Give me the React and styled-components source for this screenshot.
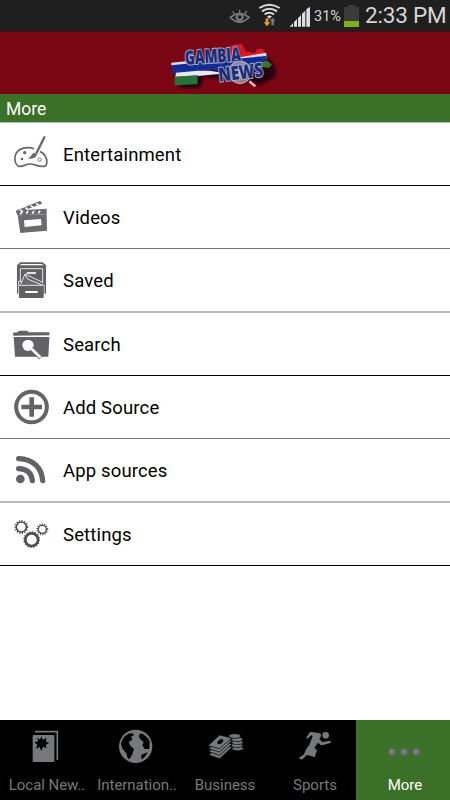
import React, { useState } from "react";

import styled, { createGlobalStyle } from "styled-components";

const GlobalStyle = createGlobalStyle`
  * {
    box-sizing: border-box;
  }
  body {
    margin: 0;
    background: #fff;
    font-family: Roboto, "Liberation Sans", sans-serif;
  }
`;

// the icons are drawn at three units to the pixel
function PaletteIcon() {
  return (
    <RowSvg viewBox="24 129 150 126" fill="none" stroke="#68686a">
      <path
        d="M102 176C84 169 55 173 47 193C42 207 45 222 54 228C66 234 76 221 91 222C105 223 115 231 133 229C143 227 142 208 136 199C133 193 127 187 120 185"
        strokeWidth="5"
      />
      <path d="M133 142L110 188" strokeWidth="7" strokeLinecap="round" />
      <path
        d="M103 188L111 193C109 203 99 209 82 205C94 202 93 192 103 188Z"
        fill="#68686a"
        stroke="none"
      />
      <circle cx="74" cy="188" r="5" fill="#68686a" stroke="none" />
      <circle cx="66" cy="207" r="4" fill="#68686a" stroke="none" />
      <circle cx="119" cy="209" r="5" strokeWidth="2.5" />
    </RowSvg>
  );
}

function ClapperIcon() {
  return (
    <RowSvg viewBox="24 18 150 126" fill="#6b6b6d">
      <path d="M48 62L119 33Q124 32 126 41L51 70Z" />
      <path d="M48 63L52 76L140 73V56L62 61Z" />
      <path
        d="M60 60l9 5M76 53l9 6M92 47l9 6M108 40l9 6M66 65l-5 8M84 63l-5 8M102 63l-5 8M120 62l-5 8"
        stroke="#fff"
        strokeWidth="5"
      />
      <path d="M53 76L140 73L141 122L61 129Z" />
      <path d="M72 91L123 87L125 106L74 111Z" fill="#fff" />
    </RowSvg>
  );
}

function CabinetIcon() {
  return (
    <RowSvg viewBox="24 207 150 126">
      <path d="M51 226L61 217H128L138 226V311H51Z" fill="#616163" />
      <path d="M58 226L64 222H125L131 226Z" fill="#fff" />
      <path
        d="M61 274V236H128V280M56 312V274H64M132 312V284"
        fill="none"
        stroke="#fff"
        strokeWidth="2.5"
      />
      <path d="M80 249H108" stroke="#fff" strokeWidth="5" />
      <path d="M62 283L75 252L83 267L127 285Z" fill="#6c6c6e" />
      <path
        d="M62 283L75 252L83 267L127 285M75 252L128 277"
        fill="none"
        stroke="#fff"
        strokeWidth="2.5"
      />
      <path d="M57 287H131V324H57Z" fill="#616163" />
      <path d="M57 286H131" stroke="#fff" strokeWidth="2.5" />
      <path d="M76 306H113" stroke="#fff" strokeWidth="6" />
    </RowSvg>
  );
}

function FolderSearchIcon() {
  return (
    <RowSvg viewBox="24 39 150 126">
      <path
        d="M40 77L39 68L53 67L57 62H82L86 67H148V76ZM41 81H148L145 140H45Z"
        fill="#626264"
      />
      <circle cx="84" cy="106" r="17" fill="#fff" />
      <path d="M94 116L122 143" stroke="#666" strokeWidth="13" />
      <path d="M92 114L121 142" stroke="#fff" strokeWidth="8" />
    </RowSvg>
  );
}

function AddIcon() {
  return (
    <RowSvg viewBox="24 228 150 126" fill="none" stroke="#646466">
      <circle cx="94.5" cy="291" r="46" strokeWidth="12" />
      <path d="M95 262V320M64 291H126" strokeWidth="14" />
    </RowSvg>
  );
}

function FeedIcon() {
  return (
    <RowSvg viewBox="24 27 150 126" fill="none" stroke="#626264">
      <circle cx="61" cy="117" r="13" fill="#626264" stroke="none" />
      <path
        d="M56 86C81 87 95 100 97 122M56 56C99 57 125 83 128 122"
        strokeWidth="16"
        strokeLinecap="round"
      />
    </RowSvg>
  );
}

function Gear({ cx, cy, r, width, teeth }) {
  const step = (2 * Math.PI * (r + 3)) / teeth;
  return (
    <g fill="none" stroke="#505052">
      <circle cx={cx} cy={cy} r={r} strokeWidth={width} />
      <circle
        cx={cx}
        cy={cy}
        r={r + 3}
        strokeWidth="6"
        strokeDasharray={`${step * 0.45} ${step * 0.55}`}
      />
    </g>
  );
}

function GearsIcon() {
  return (
    <RowSvg viewBox="24 217 150 126">
      <Gear cx={64} cy={259} r={15} width={5} teeth={15} />
      <Gear cx={127} cy={266} r={12} width={4} teeth={14} />
      <Gear cx={95} cy={297} r={19} width={8} teeth={16} />
    </RowSvg>
  );
}

function NewspaperIcon() {
  return (
    <TabSvg viewBox="69 36 132 117">
      <path
        d="M101 60H160Q163 60 163 63V138Q163 141 160 141H101Q98 141 98 138V63Q98 60 101 60Z"
        fill="#77787b"
      />
      <path
        d="M105 50H172V135"
        fill="none"
        stroke="#77787b"
        strokeWidth="5"
      />
      <path
        d="M124 64L129 75L139 68L138 80L148 84L138 89L139 100L129 95L124 108L119 96L108 101L112 89L103 82L114 79L112 68L120 74Z"
        fill="#000"
      />
    </TabSvg>
  );
}

function GlobeIcon() {
  return (
    <TabSvg viewBox="339 36 132 117">
      <circle cx="407" cy="94" r="50" fill="#77787b" />
      <path
        d="M385 56Q402 52 402 61L392 66L398 73L386 82L390 91L402 102L397 118L389 132Q381 132 380 116L368 102L363 88Q365 67 385 56ZM422 55Q440 62 449 79L448 102L434 102L427 91L431 81L421 73L416 63ZM424 119L443 112Q435 129 424 133Z"
        fill="#000"
      />
    </TabSvg>
  );
}

function MoneyIcon() {
  return (
    <TabSvg viewBox="69 36 132 117">
      <g fill="#77787b" stroke="#000" strokeWidth="2">
        <path d="M86 120L119 131L157 96L124 91Z" />
        <path d="M86 110L119 121L157 86L124 81Z" />
        <path d="M86 101L119 111L157 76L124 70Z" />
        <path d="M84 92L118 101L156 69L119 60Z" />
        <ellipse cx="173" cy="100" rx="17" ry="7" />
        <ellipse cx="171" cy="91" rx="17" ry="7" />
        <ellipse cx="172" cy="82" rx="17" ry="7" />
        <ellipse cx="171" cy="73" rx="17" ry="7" />
        <ellipse cx="164" cy="63" rx="18" ry="7" />
      </g>
      <ellipse
        cx="121"
        cy="80"
        rx="10"
        ry="6"
        fill="#000"
        transform="rotate(-35 121 80)"
      />
    </TabSvg>
  );
}

function RunnerIcon() {
  return (
    <TabSvg viewBox="-9 -3 132 117" fill="#77787b">
      <circle cx="89" cy="22" r="10" />
      <path d="M31 29L41 13Q43 11 47 12L70 16Q78 19 74 26L70 33L79 42L103 38Q107 41 103 45L79 52Q74 52 71 48L66 44L55 59L63 66L57 86Q53 89 49 85L42 83L33 81L19 94Q13 95 8 91L24 79L31 62L40 51L50 24L45 22L37 31Q32 34 31 29Z" />
    </TabSvg>
  );
}

function DotsIcon() {
  return (
    <TabSvg viewBox="129 36 132 117">
      <defs>
        <radialGradient id="dot" cx="0.4" cy="0.4">
          <stop offset="0" stopColor="#8a8a8a" />
          <stop offset="1" stopColor="#626266" />
        </radialGradient>
      </defs>
      <circle cx="157" cy="112" r="12" fill="url(#dot)" />
      <circle cx="193" cy="112" r="12" fill="url(#dot)" />
      <circle cx="230" cy="112" r="12" fill="url(#dot)" />
    </TabSvg>
  );
}

function StatusIcons() {
  return (
    <StatusSvg viewBox="0 0 276 93">
      <g fill="none" stroke="#777">
        <path d="M31 52Q59 29 87 52Q59 80 31 52Z" strokeWidth="5" />
        <path d="M59 40V29M45 43L37 34M73 42L81 33" strokeWidth="4" />
        <circle cx="59" cy="51" r="9" strokeWidth="7" />
      </g>
      <g fill="none" stroke="#ddd" strokeWidth="6">
        <path d="M118 24Q148 4 179 24M126 34Q148 19 171 34M134 43Q148 34 162 43" />
      </g>
      <path d="M141 49Q148 44 156 49L148 56Z" fill="#ddd" />
      <path d="M137 55H145V67H151L141 79L131 67H137Z" fill="#eb9833" />
      <path d="M154 76V63H149L158 53L167 63H162V76Z" fill="#777" />
      <path
        d="M209 80L219 70V80ZM222 80V66L231 57V80ZM234 80V54L243 45V80ZM246 80V41L256 32V80ZM259 80V28L270 20V80Z"
        fill="#ddd"
      />
    </StatusSvg>
  );
}

function Logo() {
  return (
    <svg width="120" height="62" viewBox="0 0 360 186">
      <defs>
        <filter id="soft" x="-20%" y="-20%" width="140%" height="140%">
          <feGaussianBlur stdDeviation="5" />
        </filter>
        <radialGradient id="glass">
          <stop offset="0" stopColor="#fff" stopOpacity="0.85" />
          <stop offset="1" stopColor="#aab" stopOpacity="0.6" />
        </radialGradient>
      </defs>
      <path
        d="M40 107L160 100L205 70L330 80L348 112L345 135L300 160L240 145L130 135L120 168L60 168Z"
        fill="#25000a"
        filter="url(#soft)"
      />
      <path
        d="M195 63L205 46Q222 34 245 36L258 58L285 63L292 50L308 50L318 68V80L200 88Z"
        fill="#d91526"
      />
      <path d="M190 84L319 62V82L207 101L170 106L45 106L34 100V92L78 88Z" fill="#d8dce8" />
      <path d="M34 100L188 84L318 72L323 104L240 112L180 118L150 114L110 122L38 126Z" fill="#142b91" />
      <path d="M48 122L112 116L150 116L177 121V126L114 132L46 134Z" fill="#e8e8ee" />
      <path d="M44 135L113 129V157L44 160Z" fill="#287139" />
      <path d="M300 91L322 86L336 98L327 107L305 106Z" fill="#32782d" />
      <circle cx="240" cy="121" r="33" fill="url(#glass)" stroke="#b7a8b5" strokeWidth="4" />
      <path d="M268 148L286 163" stroke="#dcb8ad" strokeWidth="8" />
      <LogoText
        x="76"
        y="98"
        textLength="168"
        lengthAdjust="spacingAndGlyphs"
        transform="rotate(-4 76 98)"
      >
        GAMBIA
      </LogoText>
      <LogoText
        x="178"
        y="149"
        textLength="134"
        lengthAdjust="spacingAndGlyphs"
        transform="rotate(-7 178 149)"
      >
        NEWS
      </LogoText>
    </svg>
  );
}

const items = [
  { label: "Entertainment", Icon: PaletteIcon, height: 63, line: "1px solid #000" },
  { label: "Videos", Icon: ClapperIcon, height: 63, line: "1px solid #777" },
  { label: "Saved", Icon: CabinetIcon, height: 64, line: "2px solid #bbb" },
  { label: "Search", Icon: FolderSearchIcon, height: 63, line: "1px solid #000" },
  { label: "Add Source", Icon: AddIcon, height: 63, line: "1px solid #777" },
  { label: "App sources", Icon: FeedIcon, height: 64, line: "2px solid #bbb" },
  { label: "Settings", Icon: GearsIcon, height: 63, line: "1px solid #000" },
];

const tabs = [
  { label: "Local New..", Icon: NewspaperIcon },
  { label: "Internation..", Icon: GlobeIcon },
  { label: "Business", Icon: MoneyIcon },
  { label: "Sports", Icon: RunnerIcon },
  { label: "More", Icon: DotsIcon },
];

function App() {
  const [activeTab, setActiveTab] = useState("More");

  return (
    <Screen>
      <GlobalStyle />
      <StatusBar>
        <StatusIcons />
        <Percent>31%</Percent>
        <Battery />
        <Clock>2:33 PM</Clock>
      </StatusBar>
      <Header>
        <Logo />
      </Header>
      <TitleBar>More</TitleBar>
      <List>
        {items.map(({ label, Icon, height, line }) => (
          <Row key={label} $height={height} $line={line}>
            <Icon />
            <RowLabel>{label}</RowLabel>
          </Row>
        ))}
      </List>
      <TabBar>
        {tabs.map(({ label, Icon }) => (
          <Tab
            key={label}
            $active={label === activeTab}
            onClick={() => setActiveTab(label)}
          >
            <Icon />
            <TabLabel $long={label.endsWith("..")}>{label}</TabLabel>
          </Tab>
        ))}
      </TabBar>
    </Screen>
  );
}

export default App;

const Screen = styled.div`
  display: flex;
  flex-direction: column;
  width: 450px;
  height: 800px;
  overflow: hidden;
  background: #fff;
`;

const StatusBar = styled.div`
  display: flex;
  align-items: center;
  height: 31px;
  flex: none;
  padding-left: 220px;
  background: #1f1f1f;
  color: #d6d6d6;
  white-space: nowrap;
`;

const StatusSvg = styled.svg`
  width: 92px;
  height: 31px;
  flex: none;
`;

const Percent = styled.span`
  width: 28px;
  flex: none;
  margin-left: 2px;
  font-size: 14.5px;
  line-height: 31px;
  padding-top: 2px;
`;

const Battery = styled.span`
  width: 15px;
  height: 20px;
  flex: none;
  margin: 3px 0 0 2px;
  background: linear-gradient(#3b3b3b 14px, #82ad18 14px);

  &::before {
    content: "";
    display: block;
    width: 7px;
    height: 2px;
    margin: -2px auto 0;
    background: #3b3b3b;
  }
`;

const Clock = styled.span`
  margin-left: 6px;
  font-size: 22.5px;
  line-height: 31px;
  letter-spacing: -0.2px;
`;

const Header = styled.header`
  display: flex;
  justify-content: center;
  height: 63px;
  flex: none;
  padding-right: 10px;
  background: #7a0614;
  border-top: 1px solid #4d0a10;
`;

const LogoText = styled.text`
  font-family: "Open Sans", "Noto Sans", sans-serif;
  font-size: 58px;
  font-weight: 800;
  fill: #1d2c78;
  stroke: #a4a9c8;
  stroke-width: 6px;
  paint-order: stroke;
`;

const TitleBar = styled.div`
  height: 29px;
  flex: none;
  padding-left: 6px;
  background: #3b7029;
  border-bottom: 1px solid #b5bfb1;
  color: #fff;
  font-size: 17.5px;
  line-height: 30px;
`;

const List = styled.div`
  display: flex;
  flex-direction: column;
  flex: 1;
`;

const Row = styled.div`
  display: flex;
  align-items: flex-start;
  height: ${(props) => props.$height}px;
  padding: 10px 0 0 8px;
  border-bottom: ${(props) => props.$line};
`;

const RowSvg = styled.svg`
  width: 50px;
  height: 42px;
  flex: none;
`;

const RowLabel = styled.span`
  margin-left: 5px;
  color: #000;
  font-size: 18.5px;
  line-height: 44px;
  letter-spacing: 0.15px;
`;

const TabBar = styled.nav`
  display: grid;
  grid-template-columns: repeat(5, 90px);
  height: 80px;
  flex: none;
  background: #000;
`;

const Tab = styled.div`
  display: flex;
  flex-direction: column;
  align-items: center;
  padding-top: 7px;
  margin-left: ${(props) => (props.$active ? "-4px" : "0")};
  padding-left: ${(props) => (props.$active ? "4px" : "0")};
  background: ${(props) => (props.$active ? "#3b7029" : "transparent")};
  color: ${(props) => (props.$active ? "#fff" : "#77787b")};
`;

const TabSvg = styled.svg`
  width: 44px;
  height: 39px;
  flex: none;
`;

const TabLabel = styled.span`
  margin-top: 8px;
  padding-left: ${(props) => (props.$long ? "4px" : "0")};
  font-size: 15px;
  line-height: 22px;
  letter-spacing: ${(props) => (props.$long ? "-0.05px" : "0")};
  white-space: nowrap;
`;
